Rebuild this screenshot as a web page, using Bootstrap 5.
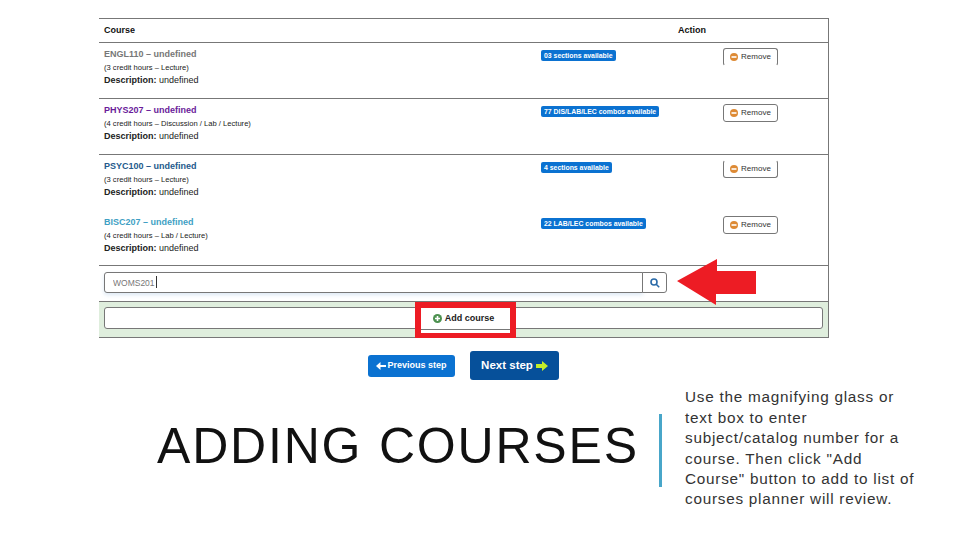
<!DOCTYPE html>
<html lang="en">
<head>
<meta charset="UTF-8">
<title>Adding courses</title>
<link href="https://cdn.jsdelivr.net/npm/bootstrap@5.3.2/dist/css/bootstrap.min.css" rel="stylesheet">
<style>
body { background: #fff; font-family: "Liberation Sans", Arial, sans-serif; color: #222; height: 540px; overflow: hidden; }
.shot { width: 730px; margin: 18px 0 0 99px; border-top: 1px solid #777; border-right: 1px solid #777; font-size: 9px; line-height: 12px; }
.head-row { height: 24px; border-bottom: 1px solid #777; font-weight: 700; color: #111; padding: 0 0 2px 5px; }
.head-course { width: 574px; }
.course-row { height: 56px; border-bottom: 1px solid #777; }
.course-row.no-line { border-bottom-color: transparent; }
.course-row.last-row { height: 55px; }
.course-info { width: 442px; padding: 5px 0 0 5px; }
.course-name { font-weight: 700; margin-bottom: 1px; }
.course-sub { font-size: 7.6px; line-height: 13px; }
.badge-col { width: 182px; padding-top: 6px; }
.seats { display: inline-block; background: #0b72d1; color: #fff; font-size: 6.9px; font-weight: 700; line-height: 11px; padding: 0 3px; border-radius: 2px; white-space: nowrap; }
.remove-btn { display: flex; align-items: center; justify-content: center; gap: 3px; width: 55px; height: 18px; margin-top: 5px; padding: 0; background: #fff; border: 1px solid #777; border-radius: 3px; font-size: 8px; color: #333; }
.remove-btn.open-bottom { border-bottom-color: transparent; }
.remove-btn.open-top { border-top-color: transparent; }
.c-grey { color: #777; } .c-purple { color: #6a1b9a; } .c-navy { color: #245a8c; } .c-sky { color: #3f9fc4; }
.search-row { height: 35px; padding: 6px 0 0 5px; position: relative; }
.search-box { width: 563px; height: 21px; position: relative; }
.search-box .form-control { height: 21px; min-height: 0; padding: 0 8px; font-size: 8.5px; color: #777; border-color: #777; border-radius: 3px 0 0 3px; box-shadow: 0 2px 4px rgba(80,140,200,.2); }
.search-box .btn { width: 25px; height: 21px; padding: 0; background: #fff; border: 1px solid #777; border-radius: 0 3px 3px 0; display: flex; align-items: center; justify-content: center; }
.text-caret { position: absolute; left: 53px; top: 4px; width: 1px; height: 12px; background: #333; z-index: 5; }
.add-row { height: 37px; background: #dfeedd; border-top: 1px solid #777; border-bottom: 1px solid #777; padding: 5px 5px 0 5px; }
.add-inner { height: 22px; background: #fff; border: 1px solid #777; border-radius: 3px; }
.add-btn { position: relative; isolation: isolate; display: flex; align-items: center; gap: 3px; font-size: 9px; font-weight: 600; color: #222; padding: 0; background: transparent; border: 0; }
.red-frame { position: absolute; z-index: -1; left: -18px; top: -10px; width: 101px; height: 36px; border: solid #ed1c24; border-width: 6px 6px 5px; background: linear-gradient(#fff 21px, #777 21px, #777 22px, #fff 22px); }
.red-arrow { position: absolute; left: 578px; top: -7px; }
.step-row { height: 29px; margin-top: 13px; width: 927px; gap: 15px; }
.prev-step { width: 87px; height: 22px; padding: 0; background: #0b72d1; color: #fff; font-size: 9px; font-weight: 700; border: 0; border-radius: 3px; gap: 1px; }
.next-step { width: 89px; height: 29px; padding: 0; background: #06509a; color: #fff; font-size: 11.5px; font-weight: 700; border: 0; border-radius: 3px; gap: 3px; }
.bottom-row { margin: 7px 0 0 157px; height: 123px; }
.big-title { width: 502px; font-size: 50px; line-height: 56px; letter-spacing: 1.8px; word-spacing: 1px; color: #111; margin: 0 0 6px; font-weight: 400; white-space: nowrap; }
.blue-bar { width: 3px; height: 73px; background: #48a6c9; margin: 4px 23px 0 0; }
.note-text { width: 240px; font-size: 15.3px; line-height: 20.4px; letter-spacing: .75px; color: #333; margin: 0; }
</style>
</head>
<body>
<div class="shot">
  <div class="head-row d-flex align-items-center">
    <div class="head-course">Course</div>
    <div>Action</div>
  </div>

  <div class="course-row d-flex">
    <div class="course-info">
      <div class="course-name c-grey">ENGL110 – undefined</div>
      <div class="course-sub">(3 credit hours – Lecture)</div>
      <div><b>Description:</b> undefined</div>
    </div>
    <div class="badge-col"><span class="seats">03 sections available</span></div>
    <div><button class="remove-btn open-bottom"><svg width="8" height="8" viewBox="0 0 8 8"><circle cx="4" cy="4" r="4" fill="#dd8a35"/><rect x="1.5" y="3.2" width="5" height="1.6" fill="#fff"/></svg>Remove</button></div>
  </div>

  <div class="course-row d-flex">
    <div class="course-info">
      <div class="course-name c-purple">PHYS207 – undefined</div>
      <div class="course-sub">(4 credit hours – Discussion / Lab / Lecture)</div>
      <div><b>Description:</b> undefined</div>
    </div>
    <div class="badge-col"><span class="seats">77 DIS/LAB/LEC combos available</span></div>
    <div><button class="remove-btn"><svg width="8" height="8" viewBox="0 0 8 8"><circle cx="4" cy="4" r="4" fill="#dd8a35"/><rect x="1.5" y="3.2" width="5" height="1.6" fill="#fff"/></svg>Remove</button></div>
  </div>

  <div class="course-row no-line d-flex">
    <div class="course-info">
      <div class="course-name c-navy">PSYC100 – undefined</div>
      <div class="course-sub">(3 credit hours – Lecture)</div>
      <div><b>Description:</b> undefined</div>
    </div>
    <div class="badge-col"><span class="seats">4 sections available</span></div>
    <div><button class="remove-btn open-top"><svg width="8" height="8" viewBox="0 0 8 8"><circle cx="4" cy="4" r="4" fill="#dd8a35"/><rect x="1.5" y="3.2" width="5" height="1.6" fill="#fff"/></svg>Remove</button></div>
  </div>

  <div class="course-row last-row d-flex">
    <div class="course-info">
      <div class="course-name c-sky">BISC207 – undefined</div>
      <div class="course-sub">(4 credit hours – Lab / Lecture)</div>
      <div><b>Description:</b> undefined</div>
    </div>
    <div class="badge-col"><span class="seats">22 LAB/LEC combos available</span></div>
    <div><button class="remove-btn"><svg width="8" height="8" viewBox="0 0 8 8"><circle cx="4" cy="4" r="4" fill="#dd8a35"/><rect x="1.5" y="3.2" width="5" height="1.6" fill="#fff"/></svg>Remove</button></div>
  </div>

  <div class="search-row">
    <div class="input-group search-box">
      <input type="text" class="form-control" value="WOMS201">
      <span class="text-caret"></span>
      <button class="btn" type="button" aria-label="Search"><svg width="10" height="10" viewBox="0 0 10 10" fill="none" stroke="#2a6aa8" stroke-width="1.6"><circle cx="4" cy="4" r="3"/><path d="M6.2 6.2 9.2 9.2"/></svg></button>
    </div>
    <svg class="red-arrow" width="80" height="48" viewBox="0 0 80 48"><path d="M0 22 40 0V12H79V35H39L39 46Z" fill="#ed1c24"/></svg>
  </div>

  <div class="add-row">
    <div class="add-inner d-flex align-items-center justify-content-center">
      <button class="add-btn">
        <span class="red-frame"></span>
        <svg width="9" height="9" viewBox="0 0 9 9"><circle cx="4.5" cy="4.5" r="4.5" fill="#4d9150"/><path d="M2 4.5H7M4.5 2V7" stroke="#fff" stroke-width="1.6"/></svg>
        Add course
      </button>
    </div>
  </div>
</div>

<div class="step-row d-flex align-items-center justify-content-center">
  <button class="prev-step d-inline-flex align-items-center justify-content-center"><svg width="10" height="8" viewBox="0 0 10 8"><path d="M10 3H4.5V0L0 4 4.5 8V5H10Z" fill="#fff"/></svg>Previous step</button>
  <button class="next-step d-inline-flex align-items-center justify-content-center">Next step<svg width="12" height="10" viewBox="0 0 12 10"><path d="M0 3H6V0L12 5 6 10V7H0Z" fill="#c4ee2a"/></svg></button>
</div>

<div class="bottom-row d-flex align-items-center">
  <h1 class="big-title">ADDING COURSES</h1>
  <div class="blue-bar"></div>
  <p class="note-text">Use the magnifying glass or text box to enter subject/catalog number for a course. Then click "Add Course" button to add to list of courses planner will review.</p>
</div>
</body>
</html>
